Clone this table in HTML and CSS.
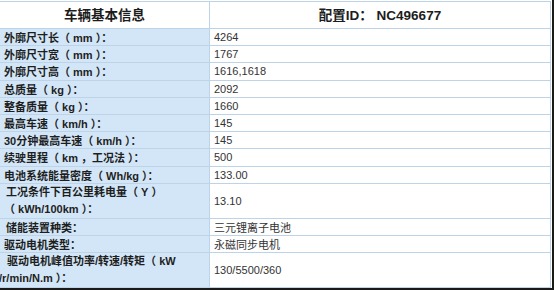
FILE: index.html
```html
<!DOCTYPE html>
<html lang="zh">
<head>
<meta charset="utf-8">
<link rel="stylesheet" href="styles.css">
</head>
<body>
<div class="frame">
  <table class="spec">
    <colgroup><col class="c-label"><col class="c-value"></colgroup>
    <tr class="head">
      <th>车辆基本信息</th>
      <th>配置ID：&nbsp;NC496677</th>
    </tr>
    <tr><td class="lab">外廓尺寸长（&nbsp;mm&nbsp;）：</td><td class="val">4264</td></tr>
    <tr><td class="lab">外廓尺寸宽（&nbsp;mm&nbsp;）：</td><td class="val">1767</td></tr>
    <tr><td class="lab">外廓尺寸高（&nbsp;mm&nbsp;）：</td><td class="val">1616,1618</td></tr>
    <tr><td class="lab">总质量（&nbsp;kg&nbsp;）：</td><td class="val">2092</td></tr>
    <tr><td class="lab">整备质量（&nbsp;kg&nbsp;）：</td><td class="val">1660</td></tr>
    <tr><td class="lab">最高车速（&nbsp;km/h&nbsp;）：</td><td class="val">145</td></tr>
    <tr><td class="lab">30分钟最高车速（&nbsp;km/h&nbsp;）：</td><td class="val">145</td></tr>
    <tr><td class="lab">续驶里程（&nbsp;km&nbsp;，工况法&nbsp;）：</td><td class="val">500</td></tr>
    <tr><td class="lab">电池系统能量密度（&nbsp;Wh/kg&nbsp;）：</td><td class="val">133.00</td></tr>
    <tr class="dbl"><td class="lab"><span class="l1">工况条件下百公里耗电量（&nbsp;Y&nbsp;）</span><span class="l2">（&nbsp;kWh/100km&nbsp;）：</span></td><td class="val">13.10</td></tr>
    <tr><td class="lab"><span class="ind">储能装置种类：</span></td><td class="val">三元锂离子电池</td></tr>
    <tr><td class="lab">驱动电机类型：</td><td class="val">永磁同步电机</td></tr>
    <tr class="dbl last"><td class="lab"><span class="l1 ind2">驱动电机峰值功率/转速/转矩（&nbsp;kW</span><span class="l2 out">/r/min/N.m&nbsp;）：</span></td><td class="val">130/5500/360</td></tr>
  </table>
</div>
</body>
</html>
```
FILE: styles.css
```css
html, body {
  margin: 0;
  padding: 0;
  background: #ffffff;
}
.frame {
  width: 554px;
  height: 290px;
  border-right: 2px solid #1a1a1a;
  border-bottom: 2px solid #1a1a1a;
  background: #ffffff;
  overflow: hidden;
  padding-top: 1px;
  box-sizing: border-box;
}
.spec {
  border-collapse: collapse;
  width: 551px;
  margin-left: -1px;
  table-layout: fixed;
  font-family: "Liberation Sans", Arial, "Noto Sans CJK SC", sans-serif;
  font-size: 11px;
  color: #222;
}
.c-label { width: 210px; }
.c-value { width: 341px; }
.spec th, .spec td {
  border: 1px solid #bcd3e8;
  padding: 0 4px;
  vertical-align: middle;
  white-space: nowrap;
  overflow: hidden;
}
.spec tr { height: 17.2px; }
.spec tr.head { height: 27px; }
.spec tr.dbl { height: 34px; }
.spec tr.last { height: 33px; }
.head th {
  background: #ffffff;
  font-size: 13.5px;
  font-weight: bold;
  color: #1c1c1c;
  text-align: center;
  padding-bottom: 2px;
}
.lab {
  background: #d3e6f8;
  font-weight: bold;
  color: #1e1e1e;
  padding-left: 6px;
}
.val {
  background: #ffffff;
  color: #333333;
  padding-left: 5px;
}
.lab .l1, .lab .l2 {
  display: block;
  line-height: 17px;
}
.lab .l1 { padding-left: 2px; }
.lab .ind { padding-left: 2px; }
.lab .ind2 { padding-left: 3px; }
.lab .out { margin-left: -5px; }
```
